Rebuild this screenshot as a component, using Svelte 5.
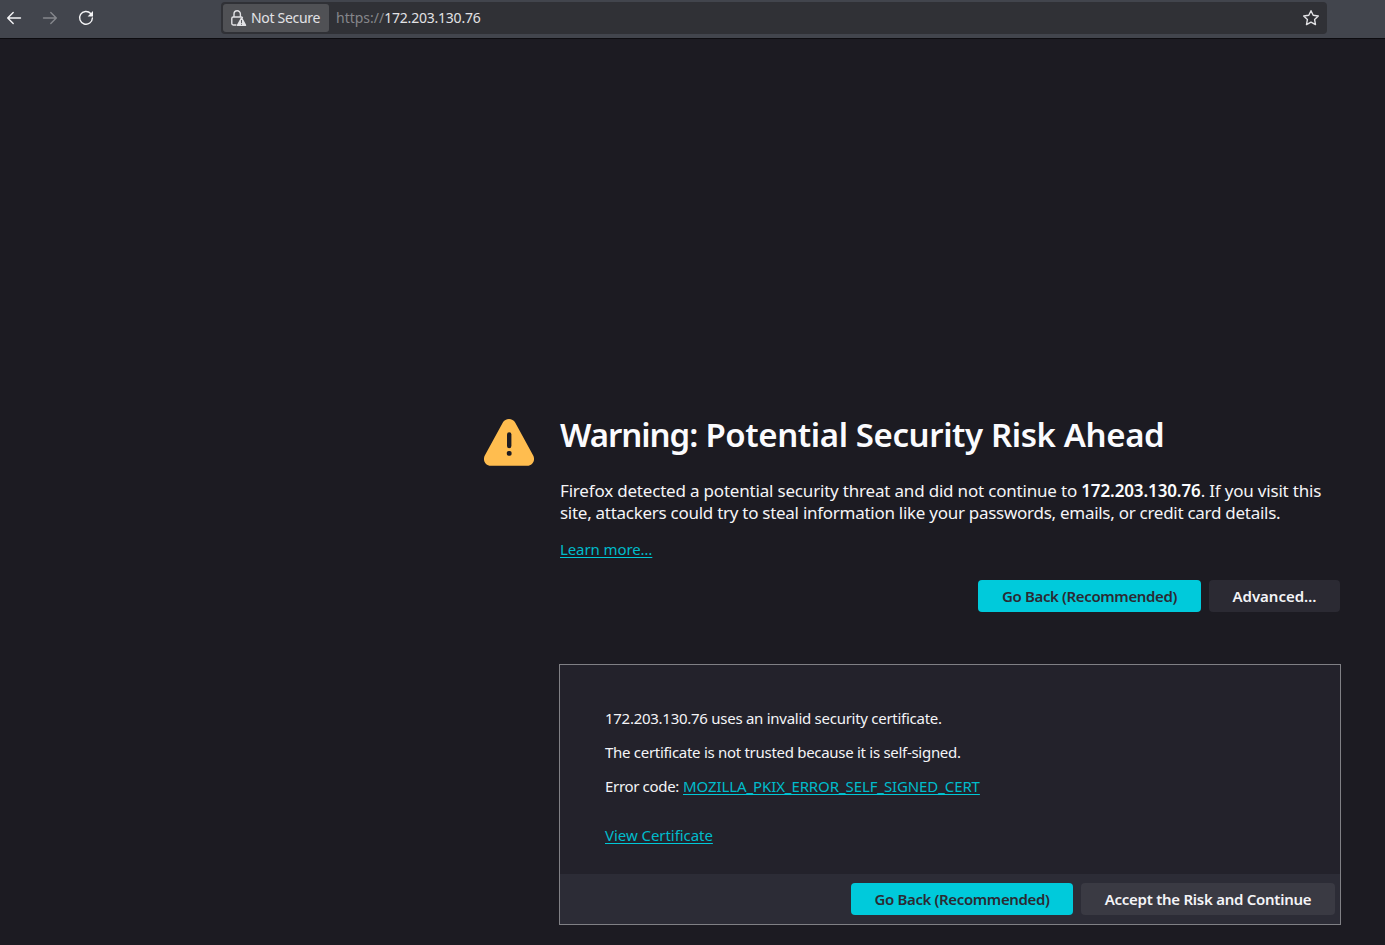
<script>
  const host = '172.203.130.76';
</script>

<div class="window">
  <header class="toolbar">
    <nav class="controls">
      <button class="tool" aria-label="Back">
        <svg width="16" height="16" viewBox="0 0 16 16"><path d="M14.5 8H2M7.2 2.5L1.7 8l5.5 5.5" /></svg>
      </button>
      <button class="tool dim" aria-label="Forward">
        <svg width="16" height="16" viewBox="0 0 16 16"><path d="M1.5 8H14M8.8 2.5L14.3 8l-5.5 5.5" /></svg>
      </button>
      <button class="tool" aria-label="Reload">
        <svg width="16" height="16" viewBox="0 0 16 16"><path d="M12.7 3.5A6.4 6.4 0 1 0 14.4 8" /><path class="solid" d="M15 1v5.4H9.6z" /></svg>
      </button>
    </nav>
    <div class="urlbar">
      <div class="identity">
        <svg class="lock" width="17" height="18" viewBox="0 0 17 18">
          <path d="M4 8V5a3.200 3.200 0 0 1 6.400 0V8M6 16H3.200a1.400 1.400 0 0 1-1.400-1.400V9.400A1.400 1.400 0 0 1 3.200 8h8a1.400 1.400 0 0 1 1.200.7" />
          <path class="solid" fill-rule="evenodd" d="M10.700 9c.4-.8 1.300-.8 1.700 0l3.700 6.700c.4.700-.1 1.400-.9 1.400H7.900c-.8 0-1.300-.7-.9-1.400zM11.100 11v3h.9v-3zM11.100 14.800v1h.9v-1z" />
        </svg>
        <span class="label">Not Secure</span>
      </div>
      <div class="url"><span class="scheme">https://</span><span class="host">{host}</span></div>
      <svg class="star" width="18" height="18" viewBox="0 0 18 18"><path d="M9 1.700l2.200 4.600 5.100.7-3.700 3.500.9 5.100L9 13.200l-4.500 2.400.9-5.100L1.700 7l5.100-.7z" /></svg>
    </div>
  </header>

  <main>
    <section class="warning">
      <svg class="alert" width="50" height="47" viewBox="0 0 50 47">
        <path fill="#ffbd4f" d="M18.700 3.800C21.400-1.200 28.600-1.200 31.300 3.800L49.200 36.600C51.600 41.200 48.600 46.700 43.200 46.700H6.800C1.400 46.700-1.600 41.200.8 36.600z" />
        <rect x="23" y="13.200" width="4.400" height="16" rx="2.200" fill="#1c1b22" />
        <rect x="22.800" y="32" width="4.800" height="4.800" rx="1.800" fill="#1c1b22" />
      </svg>
      <div class="body">
        <h1><span class="lead">Warning:</span> Potential Security Risk Ahead</h1>
        <p class="intro">
          <span class="l1">Firefox detected a potential security threat and did not continue to <b>{host}</b>. If you visit this</span><br />
          <span class="l2">site, attackers could try to steal information like your passwords, emails, or credit card details.</span>
        </p>
        <a class="learn" href="#learn">Learn more…</a>
        <div class="actions">
          <button class="btn primary">Go Back (Recommended)</button>
          <button class="btn adv">Advanced…</button>
        </div>
      </div>
    </section>

    <section class="panel">
      <div class="details">
        <p class="d1">{host} uses an invalid security certificate.</p>
        <p class="d2">The certificate is not trusted because it is self-signed.</p>
        <p><span class="d3">Error code:</span><a class="code" href="#code">MOZILLA_PKIX_ERROR_SELF_SIGNED_CERT</a></p>
        <p class="view"><a class="cert" href="#cert">View Certificate</a></p>
      </div>
      <footer>
        <button class="btn primary">Go Back (Recommended)</button>
        <button class="btn accept">Accept the Risk and Continue</button>
      </footer>
    </section>
  </main>
</div>

<style>
  :global(body) { background: #1c1b22; }
  .window {
    height: 945px;
    overflow: hidden;
    background: #1c1b22;
    color: #f4f4f7;
    font-family: "Noto Sans", "Open Sans", sans-serif;
    font-size: 15px;
  }
  button { font-family: inherit; border: 0; padding: 0; margin: 0; background: none; color: inherit; }
  svg { display: block; flex: none; }
  .toolbar {
    box-sizing: border-box;
    height: 39px;
    display: flex;
    align-items: flex-start;
    background: #42454d;
    border-bottom: 1px solid #0d0c10;
  }
  .controls { display: flex; gap: 20px; width: 221px; box-sizing: border-box; padding: 10px 0 0 6px; }
  .tool { width: 16px; height: 16px; color: #f4f4f6; }
  .tool.dim { color: #85878c; }
  .toolbar path { fill: none; stroke: currentColor; stroke-width: 1.4; stroke-linecap: round; stroke-linejoin: round; }
  .toolbar path.solid { fill: currentColor; stroke: none; }
  .urlbar {
    box-sizing: border-box;
    margin-top: 2px;
    width: 1106px;
    height: 32px;
    padding: 2px;
    display: flex;
    align-items: center;
    background: #303136;
    border-radius: 4px;
    color: #e2e2e5;
    font-size: 14px;
  }
  .identity {
    box-sizing: border-box;
    width: 106px;
    height: 28px;
    padding-left: 7px;
    display: flex;
    align-items: center;
    gap: 4px;
    border-radius: 3px;
    background: #505155;
    white-space: nowrap;
  }
  .label { letter-spacing: -0.3px; padding-bottom: 2px; }
  .url { flex: 1; margin-left: 7px; padding-bottom: 2px; white-space: nowrap; }
  .scheme { color: #85868a; }
  .host { letter-spacing: -0.22px; }
  .star { margin-right: 5px; }
  main { padding: 376px 44px 0 484px; }
  .warning { display: flex; gap: 26px; }
  .alert { margin-top: 4px; }
  .body { flex: 1; white-space: nowrap; }
  h1 { margin: 0; font-size: 33px; line-height: 40px; font-weight: 600; color: #fbfbfe; letter-spacing: -0.4px; }
  .lead { letter-spacing: -1.05px; }
  .intro { margin: 25px 0 0; font-size: 17px; line-height: 22px; }
  .l1 { letter-spacing: -0.19px; }
  .l2 { letter-spacing: -0.275px; }
  b { font-weight: 600; letter-spacing: -0.12px; color: #fbfbfe; }
  a { color: #00bccb; text-decoration-color: #00c8d7; text-underline-offset: 2px; text-decoration-thickness: 1px; }
  .learn { display: block; width: max-content; margin-top: 15px; line-height: 20px; letter-spacing: -0.1px; }
  .actions { display: flex; justify-content: flex-end; gap: 8px; margin: 21px 1px 0 0; }
  .btn { height: 32px; border-radius: 4px; font-size: 15px; font-weight: 600; white-space: nowrap; background: #2b2a33; }
  .btn.primary { width: 223px; background: #00cadb; color: #2b2a33; letter-spacing: -0.36px; }
  .btn.adv { width: 131px; }
  .panel {
    box-sizing: border-box;
    width: 782px;
    height: 261px;
    margin: 52px 0 0 75px;
    border: 1px solid #808085;
    background: #23222b;
    display: flex;
    flex-direction: column;
  }
  .details { flex: 1; padding: 43px 45px 0; white-space: nowrap; line-height: 20px; }
  .details p { margin: 0 0 14px; }
  .details p.view { margin-top: 29px; }
  .d1 { letter-spacing: -0.27px; }
  .d2 { letter-spacing: -0.29px; }
  .d3 { display: inline-block; width: 78px; letter-spacing: -0.33px; }
  .code { letter-spacing: -0.1px; }
  .cert { letter-spacing: -0.05px; }
  footer { box-sizing: border-box; height: 50px; padding: 0 5px; display: flex; align-items: center; justify-content: flex-end; gap: 8px; background: #2c2c36; }
  footer .btn.primary { width: 222px; }
  .btn.accept { width: 254px; background: #3a3a43; letter-spacing: -0.26px; }
</style>
